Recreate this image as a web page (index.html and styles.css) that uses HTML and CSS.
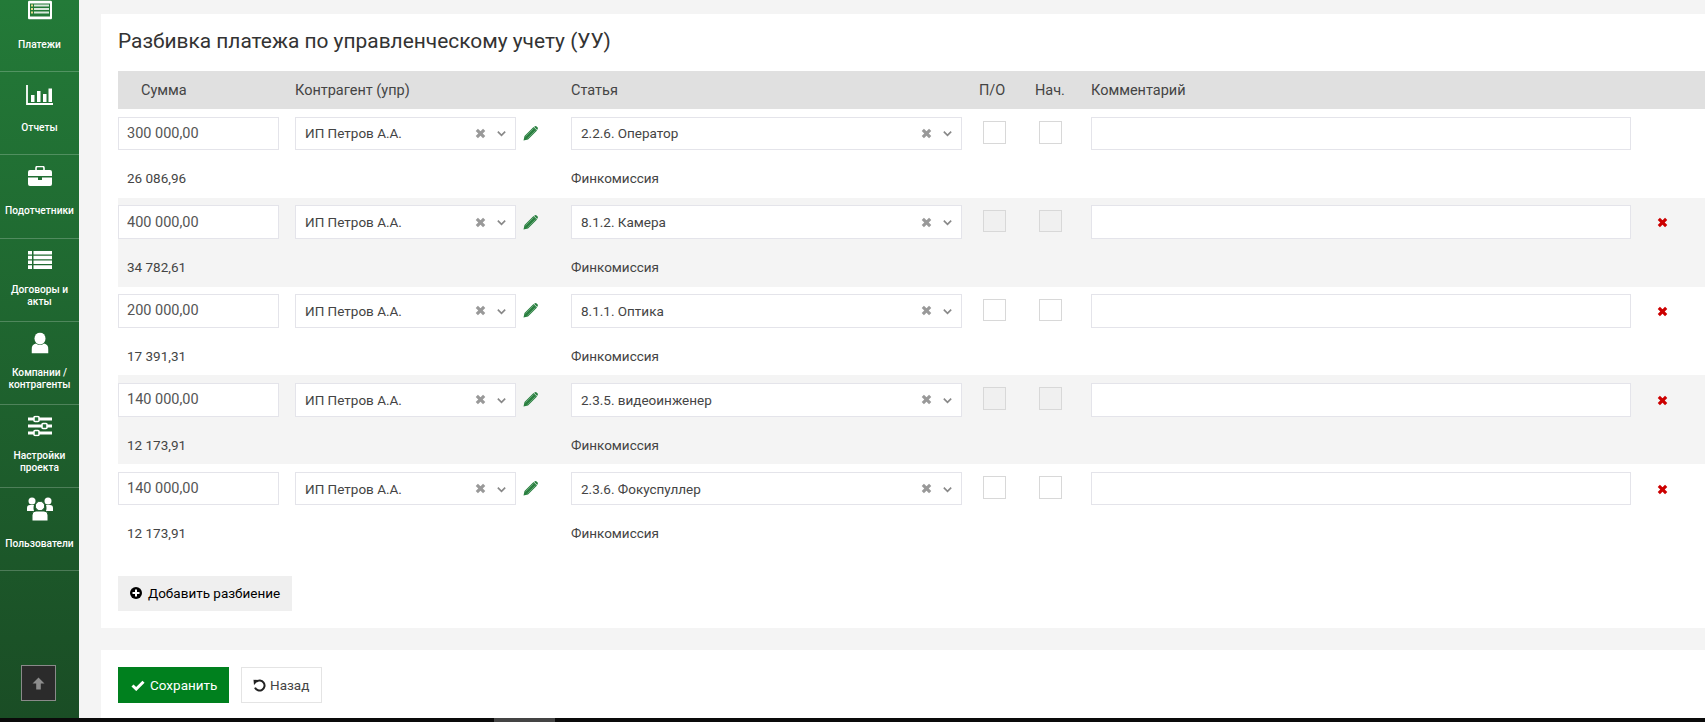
FILE: index.html
```html
<!DOCTYPE html>
<html lang="ru">
<head>
<meta charset="utf-8">
<title>Разбивка платежа</title>
<link rel="stylesheet" href="styles.css">
</head>
<body>
<svg class="defs" width="0" height="0" aria-hidden="true">
  <symbol id="i-x" viewBox="0 0 12 12"><path d="M2 2L10 10M10 2L2 10" stroke="currentColor" stroke-width="3.400" fill="none"/></symbol>
  <symbol id="i-chev" viewBox="0 0 12 8"><path d="M2 1.500L6 5.500L10 1.500" stroke="currentColor" stroke-width="1.800" fill="none"/></symbol>
  <symbol id="i-pencil" viewBox="0 0 15 15"><path d="M0.500 14.500L1.500 10L10.500 1L14 4.500L5 13.500Z M11 0.800L12.200 0.200C12.800 0 13 0 13.500 0.400L14.700 1.600C15 2 15 2.300 14.800 2.700L14.200 3.900Z" fill="currentColor"/><path d="M2.500 10.500L10.500 2.500M4.500 12.500L12.500 4.500" stroke="#fff" stroke-opacity=".35" stroke-width=".8"/></symbol>
</svg>
<div class="page">
  <aside class="sidebar">
    <nav class="nav">
      <a class="nav-item">
        <svg class="nav-icon" width="24" height="19" viewBox="0 0 24 19"><rect width="24" height="19" rx="1.500" fill="#fff"/><rect x="2" y="3" width="20" height="13" fill="#237a38"/><path d="M6 5h15M6 8.500h15M6 12h15" stroke="#d9e8dc" stroke-width="2"/><path d="M3 5h2M3 8.500h2M3 12h2" stroke="#e9d98a" stroke-width="2"/></svg>
        <span class="nav-label">Платежи</span>
      </a>
      <a class="nav-item">
        <svg class="nav-icon icon-low" width="28" height="20" viewBox="0 0 28 20"><path d="M1 0v19h26" stroke="#fff" stroke-width="1.800" fill="none"/><path d="M5 10h3.500v7H5zM11 6h3.500v11H11zM17 9h3.500v8H17zM22.500 3.500H26V17h-3.500z" fill="#fff"/></svg>
        <span class="nav-label">Отчеты</span>
      </a>
      <a class="nav-item">
        <svg class="nav-icon" width="24" height="20" viewBox="0 0 24 20"><path d="M8 4V2q0-1.500 1.500-1.500h5Q16 .5 16 2v2" stroke="#fff" stroke-width="1.600" fill="none"/><path d="M2 4h20q2 0 2 2v4H0V6q0-2 2-2zM0 11.500h10V14h4v-2.500h10V18q0 2-2 2H2q-2 0-2-2z" fill="#fff"/></svg>
        <span class="nav-label">Подотчетники</span>
      </a>
      <a class="nav-item">
        <svg class="nav-icon" width="24" height="18" viewBox="0 0 24 18"><path d="M0 0h4v3.500H0zM0 4.700h4v3.500H0zM0 9.500h4V13H0zM0 14.300h4V18H0zM5.500 0H24v3.500H5.500zM5.500 4.700H24v3.500H5.500zM5.500 9.500H24V13H5.500zM5.500 14.300H24V18H5.500z" fill="#fff"/></svg>
        <span class="nav-label two-line">Договоры и<br>акты</span>
      </a>
      <a class="nav-item">
        <svg class="nav-icon" width="17" height="21" viewBox="0 0 17 21"><ellipse cx="8.500" cy="6" rx="5.500" ry="6" fill="#fff"/><path d="M0 21v-4q0-5 4.500-6 4 3 8 0 4.500 1 4.500 6v4z" fill="#fff"/></svg>
        <span class="nav-label two-line">Компании /<br>контрагенты</span>
      </a>
      <a class="nav-item">
        <svg class="nav-icon" width="24" height="21" viewBox="0 0 24 21"><path d="M0 3.500h24M0 10.500h24M0 17.500h24" stroke="#fff" stroke-width="3"/><g fill="#237038" stroke="#fff" stroke-width="1.600"><rect x="6" y="1" width="5" height="5" rx="1"/><rect x="14" y="8" width="5" height="5" rx="1"/><rect x="6" y="15" width="5" height="5" rx="1"/></g></svg>
        <span class="nav-label two-line">Настройки<br>проекта</span>
      </a>
      <a class="nav-item">
        <svg class="nav-icon" width="26" height="24" viewBox="0 0 26 24" fill="#fff"><circle cx="5" cy="4" r="3.500"/><circle cx="21" cy="4" r="3.500"/><path d="M0 14v-3q0-3 3-3h4q-1 3 0 6zM26 14v-3q0-3-3-3h-4q1 3 0 6z"/><circle cx="13" cy="9" r="4.700" stroke="#1f5f2e"/><path d="M5 24v-6q0-4 4-4h8q4 0 4 4v6z" stroke="#1f5f2e"/></svg>
        <span class="nav-label">Пользователи</span>
      </a>
    </nav>
    <button class="to-top" type="button" aria-label="Наверх">
      <svg width="13" height="13" viewBox="0 0 13 13"><path d="M6.500 0.500L12.500 6.500H8.800V12.500H4.200V6.500H0.500z" fill="#8d8d8d"/></svg>
    </button>
  </aside>
  <main class="main">
    <section class="panel panel-split">
      <h2 class="title">Разбивка платежа по управленческому учету (УУ)</h2>
      <div class="cols head">
        <div class="head-sum">Сумма</div>
        <div>Контрагент (упр)</div>
        <div>Статья</div>
        <div class="head-check">П/О</div>
        <div class="head-check">Нач.</div>
        <div>Комментарий</div>
      </div>

      <div class="cols row">
        <input class="field sum" value="300 000,00">
        <div class="party"><div class="select"><span class="sel-text">ИП Петров А.А.</span><svg class="sel-x"><use href="#i-x"/></svg><svg class="sel-chev"><use href="#i-chev"/></svg></div><svg class="pencil"><use href="#i-pencil"/></svg></div>
        <div class="select wide"><span class="sel-text">2.2.6. Оператор</span><svg class="sel-x"><use href="#i-x"/></svg><svg class="sel-chev"><use href="#i-chev"/></svg></div>
        <span class="check"></span>
        <span class="check"></span>
        <input class="field comment">
        <span></span>
        <div class="sub-sum">26 086,96</div><div></div><div class="sub-text">Финкомиссия</div>
      </div>

      <div class="cols row alt">
        <input class="field sum" value="400 000,00">
        <div class="party"><div class="select"><span class="sel-text">ИП Петров А.А.</span><svg class="sel-x"><use href="#i-x"/></svg><svg class="sel-chev"><use href="#i-chev"/></svg></div><svg class="pencil"><use href="#i-pencil"/></svg></div>
        <div class="select wide"><span class="sel-text">8.1.2. Камера</span><svg class="sel-x"><use href="#i-x"/></svg><svg class="sel-chev"><use href="#i-chev"/></svg></div>
        <span class="check"></span>
        <span class="check"></span>
        <input class="field comment">
        <svg class="del"><use href="#i-x"/></svg>
        <div class="sub-sum">34 782,61</div><div></div><div class="sub-text">Финкомиссия</div>
      </div>

      <div class="cols row">
        <input class="field sum" value="200 000,00">
        <div class="party"><div class="select"><span class="sel-text">ИП Петров А.А.</span><svg class="sel-x"><use href="#i-x"/></svg><svg class="sel-chev"><use href="#i-chev"/></svg></div><svg class="pencil"><use href="#i-pencil"/></svg></div>
        <div class="select wide"><span class="sel-text">8.1.1. Оптика</span><svg class="sel-x"><use href="#i-x"/></svg><svg class="sel-chev"><use href="#i-chev"/></svg></div>
        <span class="check"></span>
        <span class="check"></span>
        <input class="field comment">
        <svg class="del"><use href="#i-x"/></svg>
        <div class="sub-sum">17 391,31</div><div></div><div class="sub-text">Финкомиссия</div>
      </div>

      <div class="cols row alt">
        <input class="field sum" value="140 000,00">
        <div class="party"><div class="select"><span class="sel-text">ИП Петров А.А.</span><svg class="sel-x"><use href="#i-x"/></svg><svg class="sel-chev"><use href="#i-chev"/></svg></div><svg class="pencil"><use href="#i-pencil"/></svg></div>
        <div class="select wide"><span class="sel-text">2.3.5. видеоинженер</span><svg class="sel-x"><use href="#i-x"/></svg><svg class="sel-chev"><use href="#i-chev"/></svg></div>
        <span class="check"></span>
        <span class="check"></span>
        <input class="field comment">
        <svg class="del"><use href="#i-x"/></svg>
        <div class="sub-sum">12 173,91</div><div></div><div class="sub-text">Финкомиссия</div>
      </div>

      <div class="cols row">
        <input class="field sum" value="140 000,00">
        <div class="party"><div class="select"><span class="sel-text">ИП Петров А.А.</span><svg class="sel-x"><use href="#i-x"/></svg><svg class="sel-chev"><use href="#i-chev"/></svg></div><svg class="pencil"><use href="#i-pencil"/></svg></div>
        <div class="select wide"><span class="sel-text">2.3.6. Фокуспуллер</span><svg class="sel-x"><use href="#i-x"/></svg><svg class="sel-chev"><use href="#i-chev"/></svg></div>
        <span class="check"></span>
        <span class="check"></span>
        <input class="field comment">
        <svg class="del"><use href="#i-x"/></svg>
        <div class="sub-sum">12 173,91</div><div></div><div class="sub-text">Финкомиссия</div>
      </div>

      <button class="btn-add" type="button">
        <svg class="btn-icon" width="12" height="12" viewBox="0 0 12 12"><circle cx="6" cy="6" r="6" fill="#000"/><path d="M6 2.500v7M2.500 6h7" stroke="#fff" stroke-width="2"/></svg>
        Добавить разбиение
      </button>
    </section>
    <section class="panel panel-actions">
      <button class="btn-save" type="button">
        <svg class="btn-icon" width="14" height="11" viewBox="0 0 14 11"><path d="M1.500 5.500L5.200 9L12.500 1.800" stroke="#fff" stroke-width="3" fill="none"/></svg>
        Сохранить
      </button>
      <button class="btn-back" type="button">
        <svg class="btn-icon" width="13" height="13" viewBox="0 0 13 13"><path d="M3.200 2.800A5 5 0 1 1 2 8.600" stroke="#222" stroke-width="2" fill="none"/><path d="M0.500 0.800L5.800 1L1 6z" fill="#222"/></svg>
        Назад
      </button>
    </section>
  </main>
</div>
<div class="hscroll"><div class="hscroll-thumb"></div></div>
</body>
</html>
```
FILE: styles.css
```css
* { box-sizing: border-box; }
html, body { margin: 0; height: 722px; overflow: hidden; }
body {
  display: flex;
  flex-direction: column;
  background: #f4f4f4;
  color: #333;
  font-family: Roboto, "Liberation Sans", sans-serif;
  font-size: 14.5px;
}
.defs { position: absolute; }
.page { display: flex; height: 718px; flex: none; }

.sidebar {
  position: relative;
  width: 79px;
  flex: none;
  overflow: hidden;
  background: linear-gradient(#237a38, #1a4d25);
}
.nav { margin-top: -11px; }
.nav-item {
  display: block;
  height: 83.2px;
  position: relative;
  border-bottom: 1px solid rgba(255, 255, 255, .22);
  color: #fff;
  text-align: center;
}
.nav-icon { position: absolute; left: 50%; top: 21px; transform: translate(-50%, -50%); }
.icon-low { top: 23px; }
.nav-label {
  position: absolute;
  left: 0; right: 0;
  top: 44px;
  height: 24px;
  display: flex;
  align-items: center;
  justify-content: center;
  font-size: 10.2px;
  font-weight: 500;
  line-height: 12px;
}
.two-line { top: 45.5px; }
.to-top {
  position: absolute;
  left: 21px;
  top: 665px;
  width: 35px;
  height: 36px;
  padding: 0;
  display: flex;
  align-items: center;
  justify-content: center;
  background: #2b2b2b;
  border: 1px solid #8a8a8a;
}

.main {
  flex: 1;
  min-width: 0;
  padding: 14px 0 0 22px;
  display: flex;
  flex-direction: column;
  gap: 22px;
}
.panel { background: #fff; }
.panel-split { height: 614px; padding: 0 0 0 17px; }
.title {
  margin: 0;
  height: 57px;
  padding-top: 14px;
  font-size: 20.9px;
  line-height: 26px;
  font-weight: 400;
  color: #333;
}
.cols {
  display: grid;
  grid-template-columns: 177px 276px 405px 56px 59px 540px 1fr;
}
.head {
  height: 38px;
  align-items: center;
  background: #e0e0e0;
  color: #444;
}
.head-sum { padding-left: 23px; }
.head-check { padding-left: 3px; }
.row {
  height: 88.8px;
  padding-top: 7.6px;
  grid-template-rows: 33.6px 1fr;
  align-items: start;
}
.alt { background: #f4f4f4; }

.field {
  display: block;
  height: 33.6px;
  margin: 0;
  background: #fff;
  border: 1px solid #e4e4ea;
  border-radius: 0;
  color: #555;
  font: inherit;
  outline: none;
}
.sum { width: 161px; padding: 0 8px; }
.comment { width: 540px; }

.party { display: flex; align-items: center; height: 33.6px; }
.select {
  display: flex;
  align-items: center;
  width: 221px;
  height: 33.6px;
  flex: none;
  padding: 0 8px 0 9px;
  background: #fff;
  border: 1px solid #e4e4ea;
  font-size: 13.5px;
  color: #444;
}
.select.wide { width: 391px; }
.sel-text { flex: 1; white-space: nowrap; }
.sel-x { width: 11px; height: 11px; color: #999; margin-right: 10px; }
.sel-chev { width: 11px; height: 8px; margin-top: 2px; color: #888; }
.pencil { width: 15px; height: 15px; margin-left: 7px; color: #2a8040; }
.check {
  display: block;
  width: 23px;
  height: 22.6px;
  margin: 4.4px 0 0 7px;
  background: #fff;
  border: 1px solid #d8d8d8;
}
.alt .check { background: #f0f0f0; }
.del { width: 11px; height: 11px; margin: 12px 0 0 26px; color: #cc0000; }

.sub-sum, .sub-text { font-size: 13.5px; color: #444; line-height: 16px; padding-top: 20px; }
.sub-sum { padding-left: 9px; }

.btn-add {
  display: flex;
  align-items: center;
  gap: 6px;
  width: 174px;
  height: 35px;
  margin-top: 23px;
  padding: 0 12px;
  background: #efefef;
  border: 0;
  color: #000;
  font: inherit;
  font-size: 13.5px;
  white-space: nowrap;
}
.btn-icon { flex: none; }

.panel-actions { flex: 1; display: flex; gap: 12px; padding: 17px 0 0 17px; }
.btn-save, .btn-back {
  display: flex;
  align-items: center;
  height: 36px;
  font: inherit;
  font-size: 13.5px;
  padding: 0 0 0 13px;
  gap: 5px;
}
.btn-save { width: 111px; background: #00801e; color: #fff; border: 0; }
.btn-back { width: 81px; padding-left: 11px; gap: 4px; background: #fff; color: #444; border: 1px solid #e4e4e4; }

.hscroll { height: 4px; background: #0a0a0a; flex: none; }
.hscroll-thumb { width: 61px; height: 4px; margin-left: 494px; background: #444; }
```
